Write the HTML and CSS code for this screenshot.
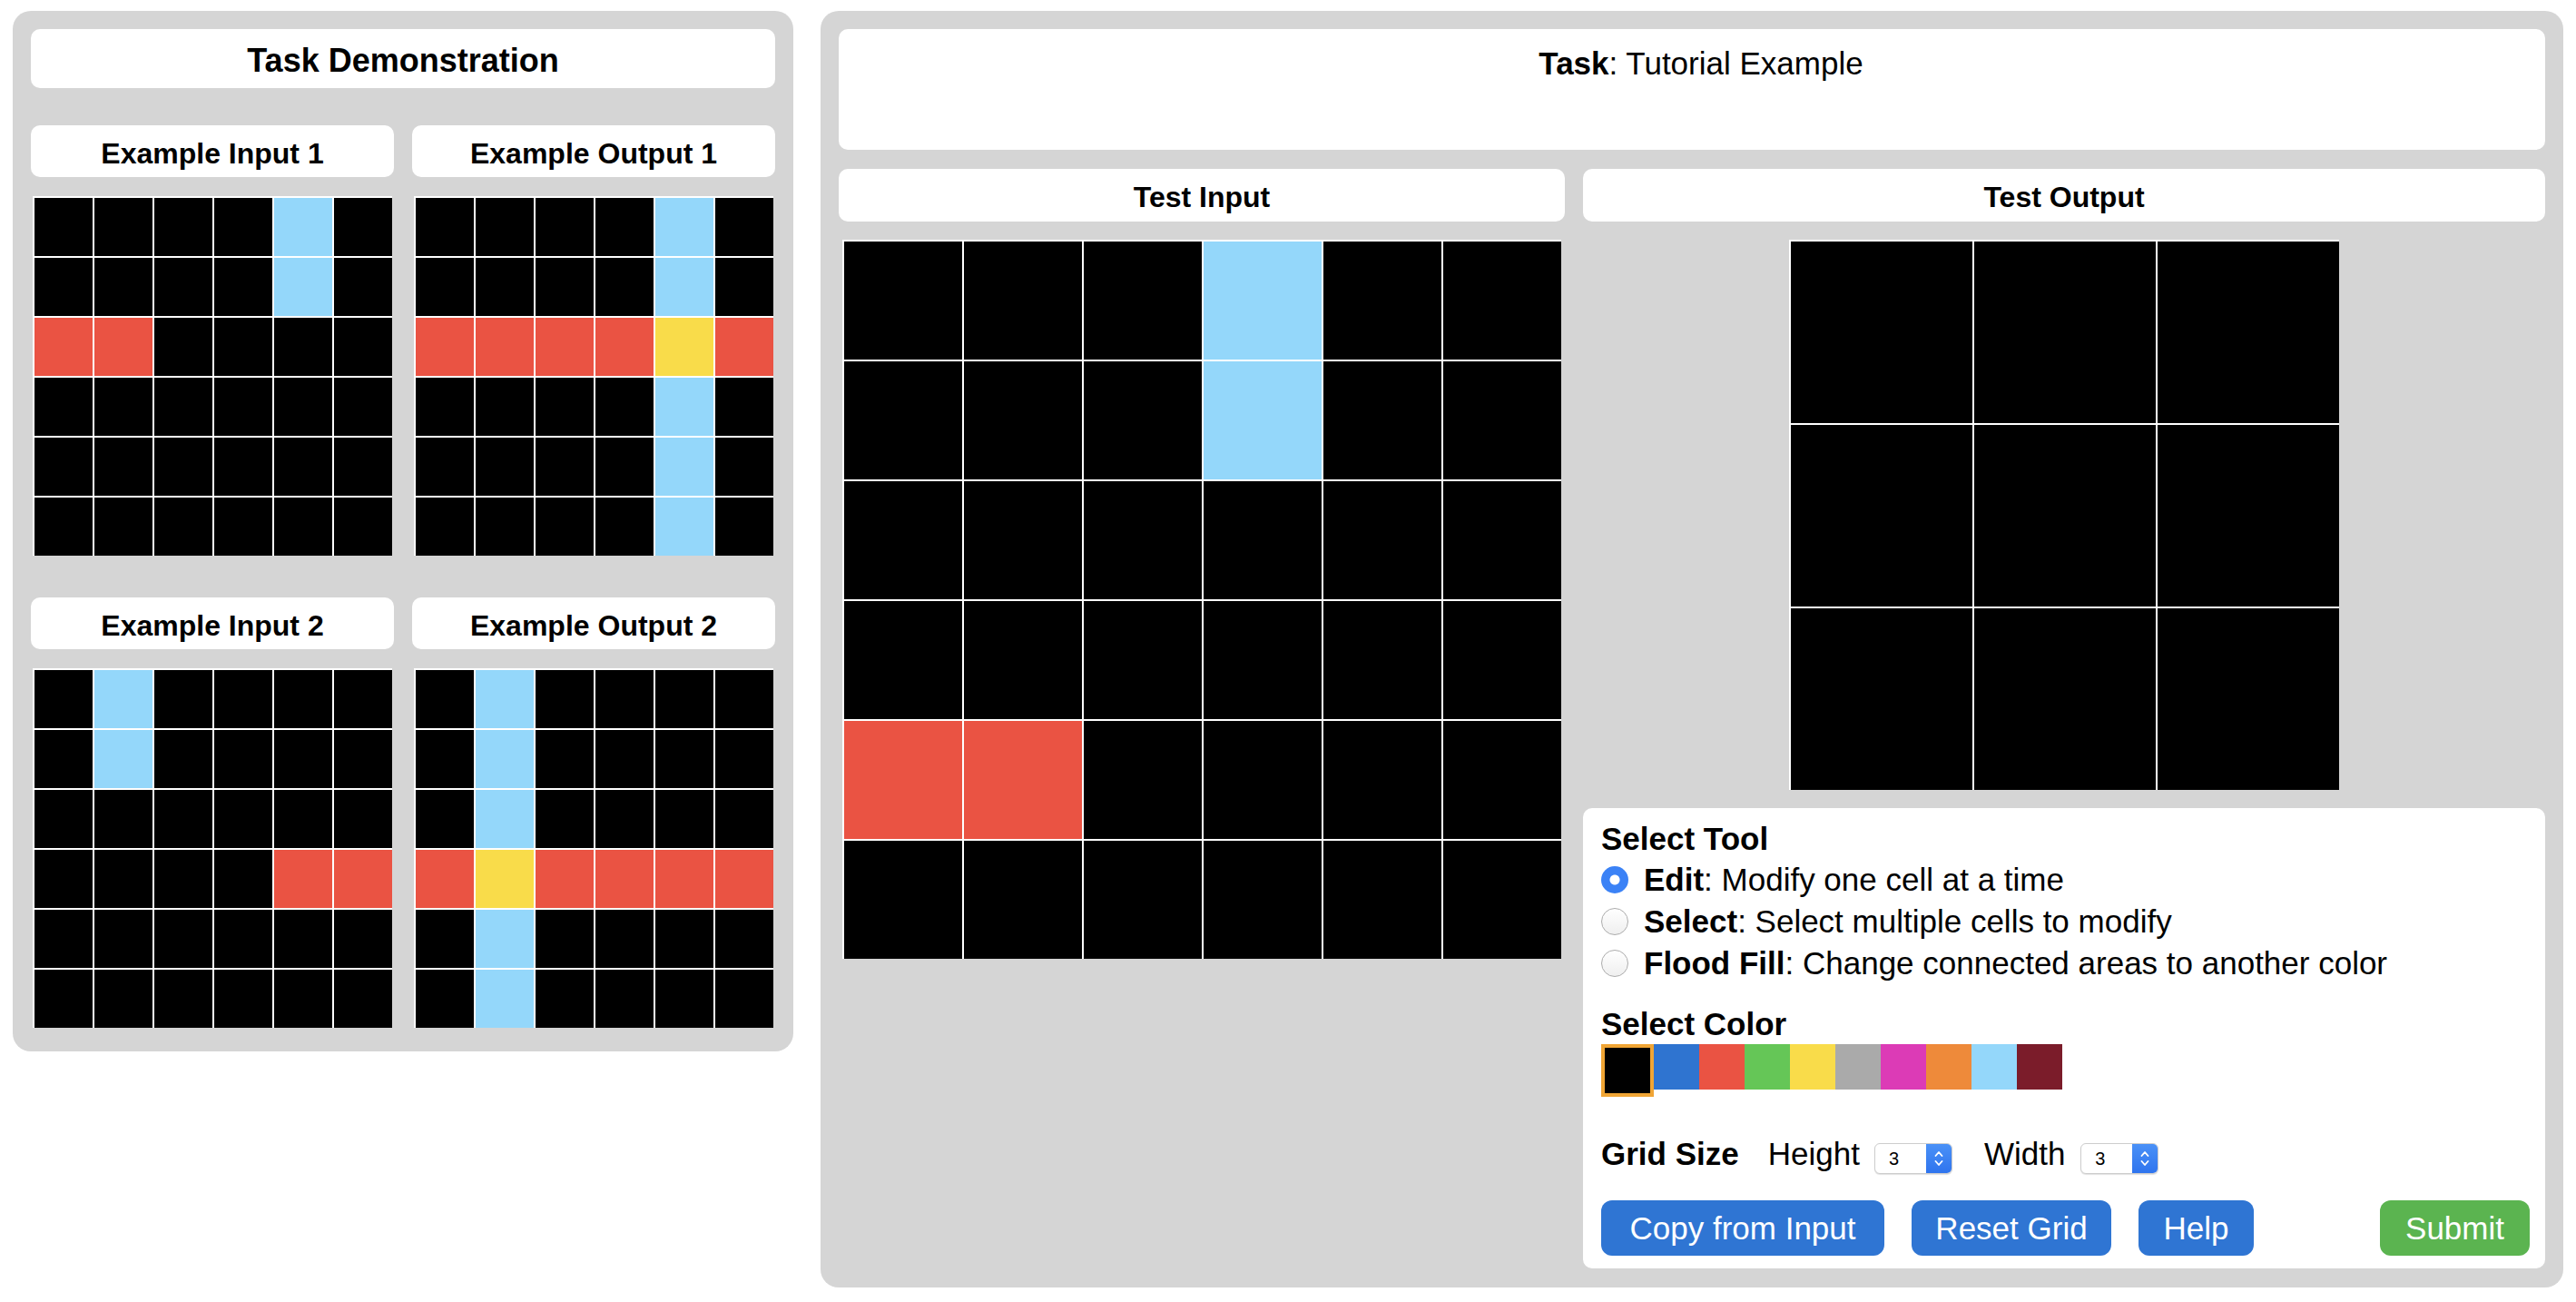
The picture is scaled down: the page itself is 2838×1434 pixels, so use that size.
FILE: index.html
```html
<!DOCTYPE html>
<html lang="en">
<head>
<meta charset="utf-8">
<title>Task Demonstration</title>
<link rel="stylesheet" href="styles.css">
</head>
<body>
<div class="app">
  <section class="panel demo">
    <div class="heading">Task Demonstration</div>

    <div class="pair pair-first">
      <div class="example">
        <div class="label">Example Input 1</div>
        <div class="grid g6">
          <div class="c0"></div><div class="c0"></div><div class="c0"></div><div class="c0"></div><div class="c8"></div><div class="c0"></div>
          <div class="c0"></div><div class="c0"></div><div class="c0"></div><div class="c0"></div><div class="c8"></div><div class="c0"></div>
          <div class="c2"></div><div class="c2"></div><div class="c0"></div><div class="c0"></div><div class="c0"></div><div class="c0"></div>
          <div class="c0"></div><div class="c0"></div><div class="c0"></div><div class="c0"></div><div class="c0"></div><div class="c0"></div>
          <div class="c0"></div><div class="c0"></div><div class="c0"></div><div class="c0"></div><div class="c0"></div><div class="c0"></div>
          <div class="c0"></div><div class="c0"></div><div class="c0"></div><div class="c0"></div><div class="c0"></div><div class="c0"></div>
        </div>
      </div>
      <div class="example">
        <div class="label">Example Output 1</div>
        <div class="grid g6">
          <div class="c0"></div><div class="c0"></div><div class="c0"></div><div class="c0"></div><div class="c8"></div><div class="c0"></div>
          <div class="c0"></div><div class="c0"></div><div class="c0"></div><div class="c0"></div><div class="c8"></div><div class="c0"></div>
          <div class="c2"></div><div class="c2"></div><div class="c2"></div><div class="c2"></div><div class="c4"></div><div class="c2"></div>
          <div class="c0"></div><div class="c0"></div><div class="c0"></div><div class="c0"></div><div class="c8"></div><div class="c0"></div>
          <div class="c0"></div><div class="c0"></div><div class="c0"></div><div class="c0"></div><div class="c8"></div><div class="c0"></div>
          <div class="c0"></div><div class="c0"></div><div class="c0"></div><div class="c0"></div><div class="c8"></div><div class="c0"></div>
        </div>
      </div>
    </div>

    <div class="pair pair-second">
      <div class="example">
        <div class="label">Example Input 2</div>
        <div class="grid g6">
          <div class="c0"></div><div class="c8"></div><div class="c0"></div><div class="c0"></div><div class="c0"></div><div class="c0"></div>
          <div class="c0"></div><div class="c8"></div><div class="c0"></div><div class="c0"></div><div class="c0"></div><div class="c0"></div>
          <div class="c0"></div><div class="c0"></div><div class="c0"></div><div class="c0"></div><div class="c0"></div><div class="c0"></div>
          <div class="c0"></div><div class="c0"></div><div class="c0"></div><div class="c0"></div><div class="c2"></div><div class="c2"></div>
          <div class="c0"></div><div class="c0"></div><div class="c0"></div><div class="c0"></div><div class="c0"></div><div class="c0"></div>
          <div class="c0"></div><div class="c0"></div><div class="c0"></div><div class="c0"></div><div class="c0"></div><div class="c0"></div>
        </div>
      </div>
      <div class="example">
        <div class="label">Example Output 2</div>
        <div class="grid g6">
          <div class="c0"></div><div class="c8"></div><div class="c0"></div><div class="c0"></div><div class="c0"></div><div class="c0"></div>
          <div class="c0"></div><div class="c8"></div><div class="c0"></div><div class="c0"></div><div class="c0"></div><div class="c0"></div>
          <div class="c0"></div><div class="c8"></div><div class="c0"></div><div class="c0"></div><div class="c0"></div><div class="c0"></div>
          <div class="c2"></div><div class="c4"></div><div class="c2"></div><div class="c2"></div><div class="c2"></div><div class="c2"></div>
          <div class="c0"></div><div class="c8"></div><div class="c0"></div><div class="c0"></div><div class="c0"></div><div class="c0"></div>
          <div class="c0"></div><div class="c8"></div><div class="c0"></div><div class="c0"></div><div class="c0"></div><div class="c0"></div>
        </div>
      </div>
    </div>
  </section>

  <section class="panel work">
    <div class="task"><b>Task</b>: Tutorial Example</div>

    <div class="test-row">
      <div class="test-in">
        <div class="label">Test Input</div>
        <div class="grid g6-big">
          <div class="c0"></div><div class="c0"></div><div class="c0"></div><div class="c8"></div><div class="c0"></div><div class="c0"></div>
          <div class="c0"></div><div class="c0"></div><div class="c0"></div><div class="c8"></div><div class="c0"></div><div class="c0"></div>
          <div class="c0"></div><div class="c0"></div><div class="c0"></div><div class="c0"></div><div class="c0"></div><div class="c0"></div>
          <div class="c0"></div><div class="c0"></div><div class="c0"></div><div class="c0"></div><div class="c0"></div><div class="c0"></div>
          <div class="c2"></div><div class="c2"></div><div class="c0"></div><div class="c0"></div><div class="c0"></div><div class="c0"></div>
          <div class="c0"></div><div class="c0"></div><div class="c0"></div><div class="c0"></div><div class="c0"></div><div class="c0"></div>
        </div>
      </div>

      <div class="test-out">
        <div class="label">Test Output</div>
        <div class="grid g3-big">
          <div class="c0"></div><div class="c0"></div><div class="c0"></div>
          <div class="c0"></div><div class="c0"></div><div class="c0"></div>
          <div class="c0"></div><div class="c0"></div><div class="c0"></div>
        </div>

        <div class="controls">
          <div class="ctl-title">Select Tool</div>
          <div class="opt"><span class="radio radio-on"></span><span><b>Edit</b>: Modify one cell at a time</span></div>
          <div class="opt"><span class="radio"></span><span><b>Select</b>: Select multiple cells to modify</span></div>
          <div class="opt"><span class="radio"></span><span><b>Flood Fill</b>: Change connected areas to another color</span></div>

          <div class="ctl-title ctl-color">Select Color</div>
          <div class="swatches">
            <span class="sw sw-sel s0"></span>
            <span class="sw s1"></span>
            <span class="sw s2"></span>
            <span class="sw s3"></span>
            <span class="sw s4"></span>
            <span class="sw s5"></span>
            <span class="sw s6"></span>
            <span class="sw s7"></span>
            <span class="sw s8"></span>
            <span class="sw s9"></span>
          </div>

          <div class="size-row">
            <b class="size-title">Grid Size</b>
            <span class="size-lbl size-h">Height</span>
            <span class="num num-h"><span class="num-val">3</span><span class="num-spin"><svg width="12" height="22" viewBox="0 0 12 22"><path d="M2.5 8 L6 4 L9.5 8 M2.5 14 L6 18 L9.5 14" fill="none" stroke="#fff" stroke-width="1.8" stroke-linecap="round" stroke-linejoin="round"/></svg></span></span>
            <span class="size-lbl size-w">Width</span>
            <span class="num num-w"><span class="num-val">3</span><span class="num-spin"><svg width="12" height="22" viewBox="0 0 12 22"><path d="M2.5 8 L6 4 L9.5 8 M2.5 14 L6 18 L9.5 14" fill="none" stroke="#fff" stroke-width="1.8" stroke-linecap="round" stroke-linejoin="round"/></svg></span></span>
          </div>

          <div class="btn-row">
            <button class="btn btn-copy">Copy from Input</button>
            <button class="btn btn-reset">Reset Grid</button>
            <button class="btn btn-help">Help</button>
            <button class="btn btn-submit">Submit</button>
          </div>
        </div>
      </div>
    </div>
  </section>
</div>
</body>
</html>
```

FILE: styles.css
```css
html, body {
  margin: 0;
  padding: 0;
  background: #ffffff;
}

body {
  font-family: "Liberation Sans", Arial, Helvetica, sans-serif;
  color: #000;
}

.app {
  display: flex;
  align-items: flex-start;
  gap: 30px;
  padding: 12px 14px;
}

.panel {
  background: #d5d5d5;
  border-radius: 20px;
  box-sizing: border-box;
}

/* ---------- left panel ---------- */
.demo {
  width: 860px;
  padding: 20px 20px 26px;
}

.heading {
  background: #fff;
  border-radius: 10px;
  height: 65px;
  box-sizing: border-box;
  padding-top: 15px;
  text-align: center;
  font-weight: bold;
  font-size: 36px;
  line-height: 40px;
}

.pair {
  display: flex;
  gap: 20px;
}

.pair-first { margin-top: 41px; }
.pair-second { margin-top: 46px; }

.example {
  width: 400px;
  display: flex;
  flex-direction: column;
  align-items: center;
}

.label {
  align-self: stretch;
  background: #fff;
  border-radius: 10px;
  height: 57px;
  box-sizing: border-box;
  padding-top: 13px;
  text-align: center;
  font-weight: bold;
  font-size: 32px;
  line-height: 36px;
}

.grid {
  display: grid;
  background: #fff;
  padding: 2px 0 0 2px;
  gap: 2px;
}

.example .grid { margin-top: 21px; }

.g6 {
  grid-template-columns: repeat(6, 64px);
  grid-auto-rows: 64px;
}

.g6-big {
  grid-template-columns: repeat(6, 130px);
  grid-auto-rows: 130px;
}

.g3-big {
  grid-template-columns: repeat(3, 200px);
  grid-auto-rows: 200px;
}

.c0 { background: #000000; }
.c2 { background: #ea5343; }
.c4 { background: #f9dc4a; }
.c8 { background: #94d7fa; }

/* ---------- right panel ---------- */
.work {
  width: 1920px;
  padding: 20px 20px 21px;
}

.task {
  background: #fff;
  border-radius: 10px;
  height: 133px;
  box-sizing: border-box;
  padding-top: 18px;
  padding-left: 20px;
  text-align: center;
  font-size: 35px;
  line-height: 40px;
}

.test-row {
  display: flex;
  align-items: flex-start;
  gap: 20px;
  margin-top: 21px;
}

.test-in,
.test-out {
  display: flex;
  flex-direction: column;
  align-items: center;
}

.test-in { width: 800px; }
.test-out { width: 1060px; }

.test-in .label,
.test-out .label { height: 58px; }

.test-in .grid,
.test-out .grid { margin-top: 20px; }

/* ---------- controls ---------- */
.controls {
  align-self: stretch;
  margin-top: 20px;
  background: #fff;
  border-radius: 10px;
  padding: 14px 17px 14px 20px;
  font-size: 35px;
}

.ctl-title {
  font-weight: bold;
  font-size: 35px;
  line-height: 40px;
  margin-bottom: 2px;
}

.ctl-color { margin-top: 24px; }

.opt {
  display: flex;
  align-items: center;
  height: 46px;
  white-space: nowrap;
}

.radio {
  width: 30px;
  height: 30px;
  box-sizing: border-box;
  border-radius: 50%;
  border: 1px solid #acacac;
  background: linear-gradient(#ffffff, #efefef);
  margin-right: 17px;
  flex: none;
}

.radio-on {
  border: none;
  background: radial-gradient(circle, #ffffff 0 5px, #3b82f6 6px);
}

.swatches {
  display: flex;
  align-items: flex-start;
}

.sw {
  width: 50px;
  height: 50px;
  display: block;
}

.sw-sel {
  border: 4px solid #f0a535;
}

.s0 { background: #000000; }
.s1 { background: #2f74d0; }
.s2 { background: #ea5343; }
.s3 { background: #65c657; }
.s4 { background: #f9dc4a; }
.s5 { background: #aaaaaa; }
.s6 { background: #dc3bb6; }
.s7 { background: #ee8a3a; }
.s8 { background: #94d7fa; }
.s9 { background: #7b1c2a; }

.size-row {
  display: flex;
  align-items: center;
  height: 40px;
  margin-top: 43px;
  white-space: nowrap;
}

.size-h { margin-left: 32px; }
.size-w { margin-left: 35px; }

.num {
  display: flex;
  width: 86px;
  height: 34px;
  box-sizing: border-box;
  border: 1px solid #cdcdcd;
  border-radius: 6px;
  background: #fff;
  box-shadow: 0 1px 1px rgba(0, 0, 0, 0.12);
  margin-top: 10px;
  overflow: hidden;
}

.num-h { margin-left: 16px; }
.num-w { margin-left: 17px; }

.num-val {
  flex: 1;
  font-size: 20px;
  line-height: 32px;
  padding-left: 15px;
}

.num-spin {
  width: 28px;
  background: linear-gradient(#4a91f7, #2f74ee);
  display: flex;
  align-items: center;
  justify-content: center;
}

.btn-row {
  display: flex;
  gap: 30px;
  margin-top: 31px;
}

.btn {
  height: 61px;
  padding: 0;
  border: none;
  border-radius: 12px;
  background: #2f75d3;
  color: #fff;
  font-family: "Liberation Sans", Arial, Helvetica, sans-serif;
  font-size: 35px;
  line-height: 40px;
  text-align: center;
  cursor: pointer;
}

.btn-copy { width: 312px; }
.btn-reset { width: 220px; }
.btn-help { width: 127px; }

.btn-submit {
  width: 165px;
  margin-left: auto;
  background: #5bb450;
}
```
